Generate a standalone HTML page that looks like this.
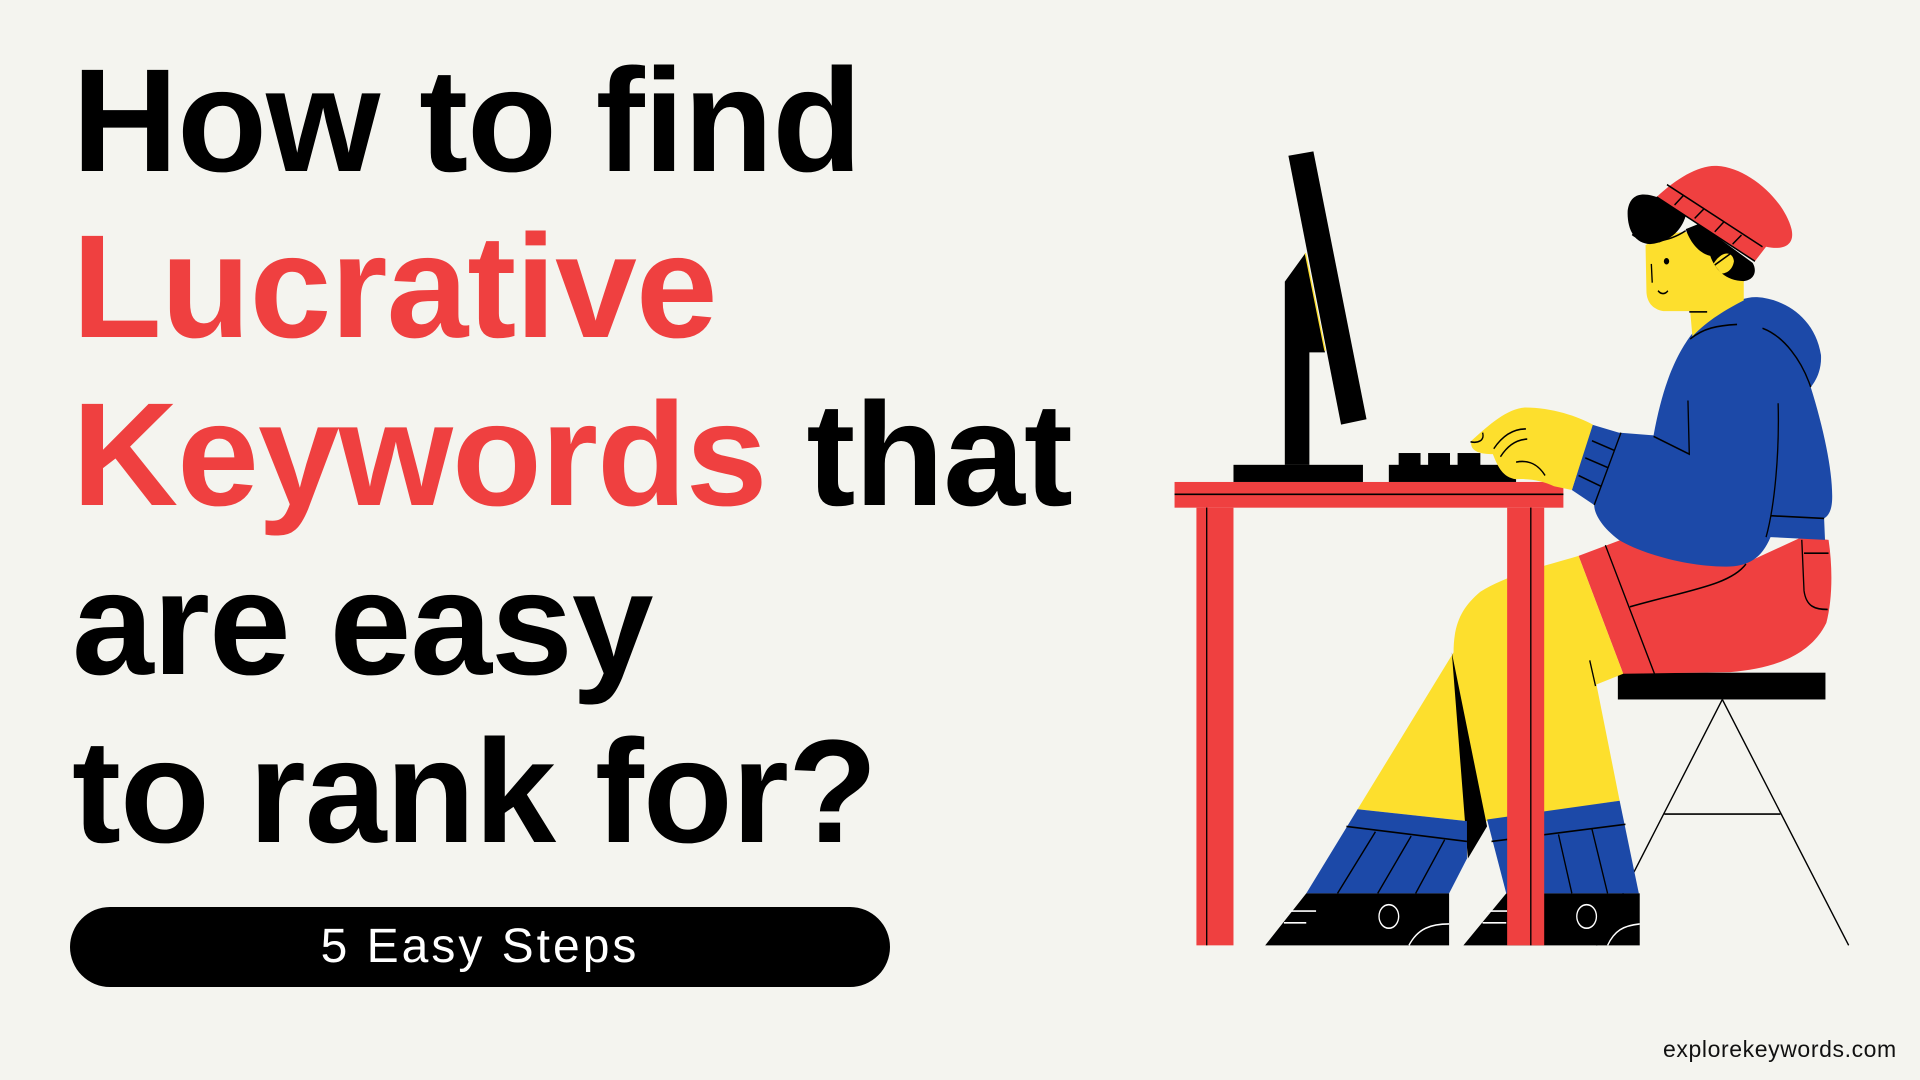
<!DOCTYPE html>
<html><head><meta charset="utf-8"><style>
html,body{margin:0;padding:0}
body{width:1920px;height:1080px;background:#f4f4ef;position:relative;overflow:hidden;font-family:"Liberation Sans",sans-serif}
.l{position:absolute;left:72px;font-weight:bold;font-size:147px;line-height:1;white-space:nowrap;color:#000;letter-spacing:-1px}
.r{color:#ef4040}
.pill{position:absolute;left:70px;top:907px;width:820px;height:80px;background:#000;border-radius:40px;color:#fff;font-size:48px;letter-spacing:3px;text-align:center;line-height:80px}
.url{position:absolute;left:1663px;top:1036px;font-size:23px;letter-spacing:0.6px;color:#111;white-space:nowrap}
svg{position:absolute;left:1150px;top:130px}
</style></head><body>
<div class="l" style="top:48px">How to find</div>
<div class="l r" style="top:214px">Lucrative</div>
<div class="l" style="top:382px"><span class="r">Keywords</span> that</div>
<div class="l" style="top:551px">are easy</div>
<div class="l" style="top:719px">to rank for?</div>
<div class="pill">5 Easy Steps</div>
<div class="url">explorekeywords.com</div>
<svg width="700" height="840" viewBox="0 0 1568 1568" preserveAspectRatio="none">
<g stroke="#000" stroke-width="3" fill="none">
<line x1="1282" y1="1063" x2="1000" y2="1522"/><line x1="1282" y1="1063" x2="1565" y2="1522"/><line x1="1152" y1="1277" x2="1412" y2="1277"/>
</g>
<rect x="1048" y="1013" width="465" height="50" fill="#000"/>
<path d="M1055,765 L1330,810 L1460,760 L1520,765 C1530,820 1528,880 1515,920 C1480,980 1400,1005 1300,1012 L1060,1015 L960,795 Z" fill="#ef4040"/>
<path d="M465,1268 L680,975 C680,920 700,890 740,862 C800,830 900,810 960,795 L1060,1015 L1000,1035 L1052,1252 L755,1290 L710,1290 Z" fill="#fddf2d"/>
<path d="M676,975 L755,1300 L712,1360 Z" fill="#000"/>
<path d="M465,1268 L710,1290 L710,1360 L670,1425 L350,1425 Z" fill="#1c49a8"/>
<path d="M755,1287 L1052,1252 L1095,1425 L798,1425 Z" fill="#1c49a8"/>
<g stroke="#000" stroke-width="3" fill="none">
<path d="M440,1300 L710,1328 M505,1310 L420,1425 M585,1318 L510,1425 M660,1325 L595,1425 M765,1328 L1065,1296 M915,1315 L945,1425 M990,1305 L1025,1425 M1020,775 L1130,1015 M1075,890 C1200,860 1300,850 1335,810 M1460,765 L1465,860 C1470,890 1490,895 1518,895 M1465,790 L1520,790 M985,990 L998,1038"/>
</g>
<path d="M350,1425 L670,1425 L670,1522 L258,1522 Z M798,1425 L1097,1425 L1097,1522 L702,1522 Z" fill="#000"/>
<g stroke="#fff" stroke-width="3" fill="none"><circle cx="535" cy="1468" r="22"/><circle cx="978" cy="1468" r="22"/><path d="M580,1522 C600,1490 630,1482 670,1482 M1025,1522 C1040,1495 1060,1485 1097,1482 M300,1480 L350,1480 M310,1458 L372,1458 M745,1480 L798,1480 M755,1458 L800,1458"/></g>
<path d="M1210,385 C1250,340 1320,310 1360,312 C1420,315 1490,350 1503,420 C1505,450 1490,470 1480,480 C1510,560 1530,640 1528,690 C1527,710 1520,720 1510,725 L1512,765 L1390,760 C1370,800 1340,815 1290,815 C1200,815 1100,790 1050,765 C1010,740 995,715 995,700 L945,672 L990,550 L1050,565 L1128,570 C1150,470 1180,420 1210,385 Z" fill="#1c49a8"/>
<g stroke="#000" stroke-width="3" fill="none"><path d="M1205,505 L1208,605 L1128,572 M1407,510 C1410,600 1400,700 1380,760 M1390,720 L1510,725 M1055,565 L995,700 M990,580 L1040,598 M975,612 L1025,630 M960,645 L1010,665 M1210,390 C1240,370 1270,365 1315,363 M1372,370 C1420,385 1460,430 1480,480"/></g>
<path d="M1110,215 C1150,195 1200,180 1240,200 L1330,250 L1330,318 C1290,335 1250,355 1215,385 L1210,338 L1150,338 C1125,335 1112,320 1112,300 Z" fill="#fddf2d"/>
<path d="M1070,150 C1075,120 1100,115 1135,125 L1200,160 C1190,190 1160,210 1120,213 C1085,212 1068,185 1070,150 Z" fill="#000"/>
<path d="M1200,185 C1210,210 1230,230 1255,235 C1265,260 1290,282 1330,282 C1355,280 1360,262 1350,248 L1230,175 Z" fill="#000"/>
<path d="M1262,250 C1280,225 1305,225 1308,245 C1305,262 1290,268 1280,268 Z" fill="#fddf2d"/>
<path d="M1135,125 C1180,90 1230,65 1270,67 C1340,70 1420,130 1437,185 C1445,215 1420,225 1380,218 L1355,245 Z" fill="#ef4040"/>
<g stroke="#000" stroke-width="3" fill="none"><path d="M1158,102 L1372,218 M1135,125 L1355,245 M1195,122 L1175,140 M1240,148 L1220,165 M1285,172 L1265,190 M1325,196 L1305,213 M1080,195 C1110,215 1160,210 1200,188 M1123,250 L1125,285 M1138,300 C1145,308 1155,306 1160,300 M1265,252 L1305,228"/></g>
<circle cx="1157" cy="245" r="6" fill="#000"/>
<rect x="1208" y="338" width="40" height="3" fill="#000"/>
<rect x="55" y="657" width="871" height="48" fill="#ef4040"/>
<line x1="55" y1="680" x2="926" y2="680" stroke="#000" stroke-width="3"/>
<rect x="104" y="705" width="83" height="817" fill="#ef4040"/>
<rect x="800" y="705" width="83" height="817" fill="#ef4040"/>
<line x1="127" y1="705" x2="127" y2="1522" stroke="#000" stroke-width="3"/>
<line x1="853" y1="705" x2="853" y2="1522" stroke="#000" stroke-width="3"/>
<polygon points="310,48 366,40 485,540 428,550" fill="#000"/>
<polygon points="302,283 348,230 392,415 357,415 357,625 302,625" fill="#000"/>
<line x1="348" y1="230" x2="392" y2="412" stroke="#fddf2d" stroke-width="3"/>
<rect x="187" y="625" width="290" height="32" fill="#000"/>
<rect x="535" y="625" width="285" height="32" fill="#000"/>
<rect x="557" y="603" width="49" height="25" fill="#000"/><rect x="623" y="603" width="49" height="25" fill="#000"/><rect x="689" y="603" width="51" height="25" fill="#000"/>
<path d="M720,580 C760,550 800,520 840,518 C900,518 960,535 992,550 L945,672 L905,665 C880,655 850,650 820,652 C790,648 780,630 768,605 C740,605 715,600 720,580 Z" fill="#fddf2d"/>
<g stroke="#000" stroke-width="3" fill="none"><path d="M745,565 C750,580 735,585 718,582 M770,595 C790,570 815,558 842,558 M785,610 C800,590 820,578 845,577 M820,620 C850,615 870,625 885,645"/></g>
</svg>
</body></html>
